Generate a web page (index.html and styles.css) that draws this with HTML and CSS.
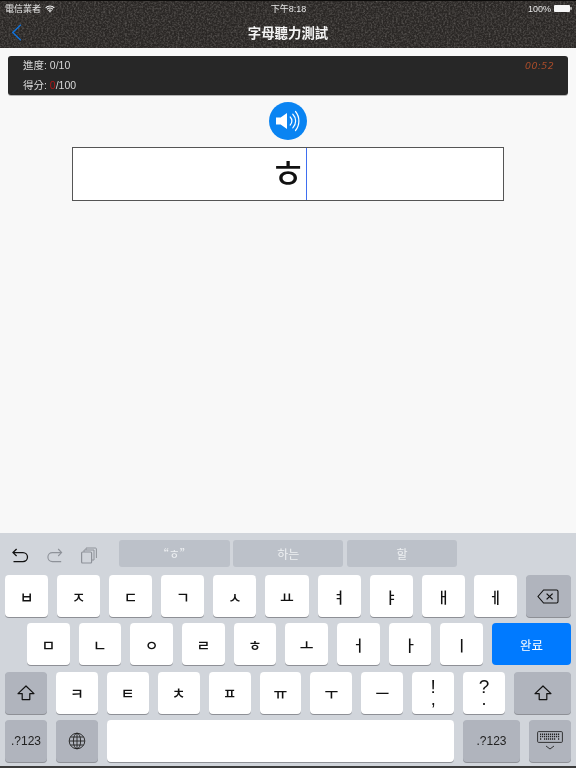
FILE: index.html
```html
<!DOCTYPE html>
<html lang="zh-Hant">
<head>
<meta charset="utf-8">
<title>字母聽力測試</title>
<link rel="stylesheet" href="styles.css">
</head>
<body>
<div class="page">
  <header class="top">
    <svg class="noise" width="576" height="48" aria-hidden="true">
      <filter id="grain" x="0" y="0" width="100%" height="100%"><feTurbulence type="fractalNoise" baseFrequency="0.55" numOctaves="3" seed="4"/><feColorMatrix values="0 0 0 0 1  0 0 0 0 .95  0 0 0 0 .9  0 0 0 .42 -.16"/></filter>
      <rect width="576" height="48" filter="url(#grain)"/>
    </svg>
    <div class="status">
      <div class="status-left">電信業者
        <svg class="wifi" width="10" height="8" viewBox="0 0 11 8"><path d="M.7 2.7a6.8 6.8 0 0 1 9.6 0M2.2 4.3a4.6 4.6 0 0 1 6.6 0M3.8 5.8a2.4 2.4 0 0 1 3.4 0" fill="none" stroke="#f4f4f4" stroke-width="1.2"/><path d="M5.5 8 4.3 6.7a1.7 1.7 0 0 1 2.4 0z" fill="#f4f4f4"/></svg>
      </div>
      <div class="status-time">下午8:18</div>
      <div class="status-right">100%
        <svg width="18" height="7" viewBox="0 0 18 7"><rect x="0" y="0" width="16" height="7" rx="1" fill="#f6f6f6"/><rect x="16.4" y="2.2" width="1.2" height="2.6" fill="#f6f6f6"/></svg>
      </div>
    </div>
    <div class="nav">
      <svg class="back" width="11" height="17" viewBox="0 0 11 17"><path d="M9.8 .8 1.8 8.5l8 7.7" fill="none" stroke="#1272d8" stroke-width="1.5"/></svg>
      <h1 class="title">字母聽力測試</h1>
    </div>
  </header>

  <main class="main">
    <section class="score">
      <div class="score-lines">
        <div>進度: 0/10</div>
        <div>得分: <span class="red">0</span>/100</div>
      </div>
      <div class="timer">00:52</div>
    </section>
    <div class="speaker">
      <svg width="38" height="38" viewBox="0 0 38 38"><circle cx="19" cy="19" r="19" fill="#0a84f2"/><path d="M7 15.4h4.6L18 11v16l-6.4-4.4H7z" fill="#fff"/><path d="M21.2 15a5.6 5.6 0 0 1 0 8M23.8 12.2a9.6 9.6 0 0 1 0 13.6M26.5 9.5a15 15 0 0 1 0 19" fill="none" stroke="#fff" stroke-width="1.2" stroke-linecap="round"/></svg>
    </div>
    <div class="answer"><span class="answer-text">ㅎ</span><span class="caret"></span></div>
  </main>

  <section class="keyboard">
    <div class="assist">
      <div class="tools">
        <svg width="18" height="16" viewBox="0 0 18 16"><path d="M2 4.6h10a4.5 4.5 0 0 1 0 9H2.5M5.6 1 2 4.6l3.6 3.4" fill="none" stroke="#111" stroke-width="1.3"/></svg>
        <svg width="18" height="16" viewBox="0 0 18 16"><path d="M15.6 4.6H6.4a4.5 4.5 0 0 0 0 9h8.8M12.2 1l3.4 3.6-3.4 3.4" fill="none" stroke="#8e9299" stroke-width="1.1"/></svg>
        <svg width="16" height="17" viewBox="0 0 16 17"><rect x=".6" y="5" width="10" height="11" rx="1" fill="none" stroke="#8e9299" stroke-width="1.2"/><path d="M3 5V3h10v10h-2.4M5 3V1h9.4a1 1 0 0 1 1 1v9" fill="none" stroke="#8e9299" stroke-width="1"/></svg>
      </div>
      <div class="cands">
        <div class="cand">“ㅎ”</div>
        <div class="cand">하는</div>
        <div class="cand">할</div>
      </div>
    </div>
    <div class="rows">
      <div class="row row-1">
        <div class="key">ㅂ</div><div class="key">ㅈ</div><div class="key">ㄷ</div><div class="key">ㄱ</div><div class="key">ㅅ</div><div class="key">ㅛ</div><div class="key">ㅕ</div><div class="key">ㅑ</div><div class="key">ㅐ</div><div class="key">ㅔ</div>
        <div class="key fn w45">
          <svg width="22" height="15" viewBox="0 0 22 15"><path d="M6.6 1H19.6a1.4 1.4 0 0 1 1.4 1.4v10.2a1.4 1.4 0 0 1-1.4 1.4H6.6L1 7.5z" fill="none" stroke="#111" stroke-width="1.1"/><path d="m9.6 4.6 6 5.8m0-5.8-6 5.8" stroke="#111" stroke-width="1.3"/></svg>
        </div>
      </div>
      <div class="row row-2">
        <div class="key">ㅁ</div><div class="key">ㄴ</div><div class="key">ㅇ</div><div class="key">ㄹ</div><div class="key">ㅎ</div><div class="key">ㅗ</div><div class="key">ㅓ</div><div class="key">ㅏ</div><div class="key">ㅣ</div>
        <div class="key done">완료</div>
      </div>
      <div class="row row-3">
        <div class="key fn">
          <svg width="18" height="16" viewBox="0 0 18 16"><path d="M9 1 1 8.6h4.2v6h7.6v-6H17z" fill="none" stroke="#111" stroke-width="1.2" stroke-linejoin="round"/></svg>
        </div>
        <div class="key">ㅋ</div><div class="key">ㅌ</div><div class="key">ㅊ</div><div class="key">ㅍ</div><div class="key">ㅠ</div><div class="key">ㅜ</div><div class="key">ㅡ</div>
        <div class="key stack"><span class="upper">!</span><span class="lower">,</span></div>
        <div class="key stack"><span class="upper">?</span><span class="lower">.</span></div>
        <div class="key fn w57">
          <svg width="18" height="16" viewBox="0 0 18 16"><path d="M9 1 1 8.6h4.2v6h7.6v-6H17z" fill="none" stroke="#111" stroke-width="1.2" stroke-linejoin="round"/></svg>
        </div>
      </div>
      <div class="row row-4">
        <div class="key fn num w42">.?123</div>
        <div class="key fn w42">
          <svg width="18" height="18" viewBox="0 0 18 18"><g fill="none" stroke="#222" stroke-width=".9"><circle cx="9" cy="9" r="7.8"/><ellipse cx="9" cy="9" rx="3.6" ry="7.8"/><path d="M9 1.2v15.6M1.2 9h15.6M2.4 5h13.2M2.4 13h13.2"/></g></svg>
        </div>
        <div class="key space"></div>
        <div class="key fn num w57">.?123</div>
        <div class="key fn w42">
          <svg width="26" height="20" viewBox="0 0 26 20"><rect x=".6" y=".6" width="24.8" height="10.8" rx="1" fill="none" stroke="#222" stroke-width=".9"/><path d="M3 3.2h20M3 5.6h20M3 8h2m2 .0h12m2 0h2" stroke="#222" stroke-width="1.5" stroke-dasharray="1.2 .8"/><path d="m9 15 4 3 4-3" fill="none" stroke="#222" stroke-width=".9"/></svg>
        </div>
      </div>
    </div>
  </section>
</div>
</body>
</html>
```

FILE: styles.css
```css
* { box-sizing: border-box; }
html, body { margin: 0; padding: 0; }
body {
  width: 576px;
  height: 768px;
  overflow: hidden;
  font-family: "Liberation Sans", "Noto Sans CJK TC", sans-serif;
  background: #f8f8f8;
}
.page { display: flex; flex-direction: column; height: 768px; will-change: transform; }

/* header */
.top {
  position: relative;
  height: 48px;
  flex: none;
  background: #2a2725;
  border-top: 1px solid #0c0b0a;
  color: #fff;
}
.noise { position: absolute; left: 0; top: 0; }
.status {
  position: relative;
  display: grid;
  grid-template-columns: 1fr auto 1fr;
  align-items: center;
  height: 15px;
  padding: 0 4px 0 5px;
  font-size: 9px;
  color: #e8e8e8;
}
.status-left { display: flex; align-items: center; gap: 4px; }
.status-right { display: flex; align-items: center; justify-content: flex-end; gap: 3px; }
.nav { position: relative; height: 32px; display: flex; align-items: center; justify-content: center; }
.back { position: absolute; left: 11px; top: 8px; }
.title { margin: 0; font-size: 13.4px; font-weight: 700; color: #f4f4f4; font-family: "Noto Sans CJK TC", sans-serif; }

/* main */
.main {
  flex: 1;
  display: flex;
  flex-direction: column;
  align-items: center;
  padding: 8px 8px 0;
}
.score {
  width: 560px;
  height: 39px;
  display: flex;
  justify-content: space-between;
  background: #272727;
  border-radius: 3px;
  padding: 0 14px 0 15px;
  box-shadow: 0 1px 0 #b4b4b4;
  color: #d8d8d8;
  font-size: 10.5px;
}
.score-lines { display: flex; flex-direction: column; gap: 5px; padding-top: 2px; line-height: 15px; }
.red { color: #b01818; }
.timer { font-style: italic; font-size: 9.5px; letter-spacing: .3px; color: #a84c2a; padding-top: 4px; font-family: "DejaVu Sans", sans-serif; }
.speaker { margin-top: 7px; height: 38px; }
.speaker svg { display: block; }
.answer {
  width: 432px;
  height: 54px;
  margin-top: 7px;
  background: #fff;
  border: 1px solid #555;
  display: flex;
  align-items: center;
  justify-content: center;
  padding-left: 1px;
}
.answer-text { font-size: 40px; line-height: 50px; padding-bottom: 6px; color: #111; font-family: "Noto Sans CJK KR", sans-serif; }
.caret { width: 1px; height: 52px; background: #3f6ff0; }

/* keyboard */
.keyboard {
  flex: none;
  height: 235px;
  background: #d1d5db;
  border-bottom: 2px solid #3c3c3c;
  font-family: "Noto Sans CJK KR", sans-serif;
}
.assist { display: flex; height: 42px; padding-top: 7px; }
.tools { width: 119px; display: flex; align-items: center; gap: 17px; padding: 4px 0 0 11px; height: 27px; }
.tools svg { display: block; flex: none; }
.cands { display: flex; gap: 3.3px; }
.cand {
  height: 27px;
  width: 110.6px;
  background: #bcc1c9;
  border-radius: 3px;
  color: #eef0f2;
  font-size: 12px;
  display: flex;
  align-items: center;
  justify-content: center;
}
.rows { display: flex; flex-direction: column; gap: 6.3px; }
.row { display: flex; gap: 9px; padding: 0 5px; height: 42px; }
.row-2 { padding-left: 27px; }
.key {
  flex: 1 1 0;
  min-width: 0;
  background: #fff;
  border-radius: 4px;
  box-shadow: 0 1px 0 #8e9096;
  color: #111;
  font-size: 15px;
  font-weight: 500;
  display: flex;
  align-items: center;
  justify-content: center;
}
.fn { background: #b0b4bd; }
.w45 { flex: 0 0 45px; }
.w57 { flex: 0 0 57px; }
.w42 { flex: 0 0 42px; }
.done { flex: 0 0 79px; background: #007aff; color: #fff; box-shadow: none; font-size: 12.5px; font-weight: 400; }
.space { flex: 1 1 auto; }
.num { font-family: "Liberation Sans", sans-serif; font-size: 12px; font-weight: 400; color: #222; }
.stack { flex-direction: column; font-family: "Liberation Sans", sans-serif; font-weight: 400; }
.upper { font-size: 19px; line-height: 12px; }
.lower { font-size: 18px; line-height: 12px; }
```
